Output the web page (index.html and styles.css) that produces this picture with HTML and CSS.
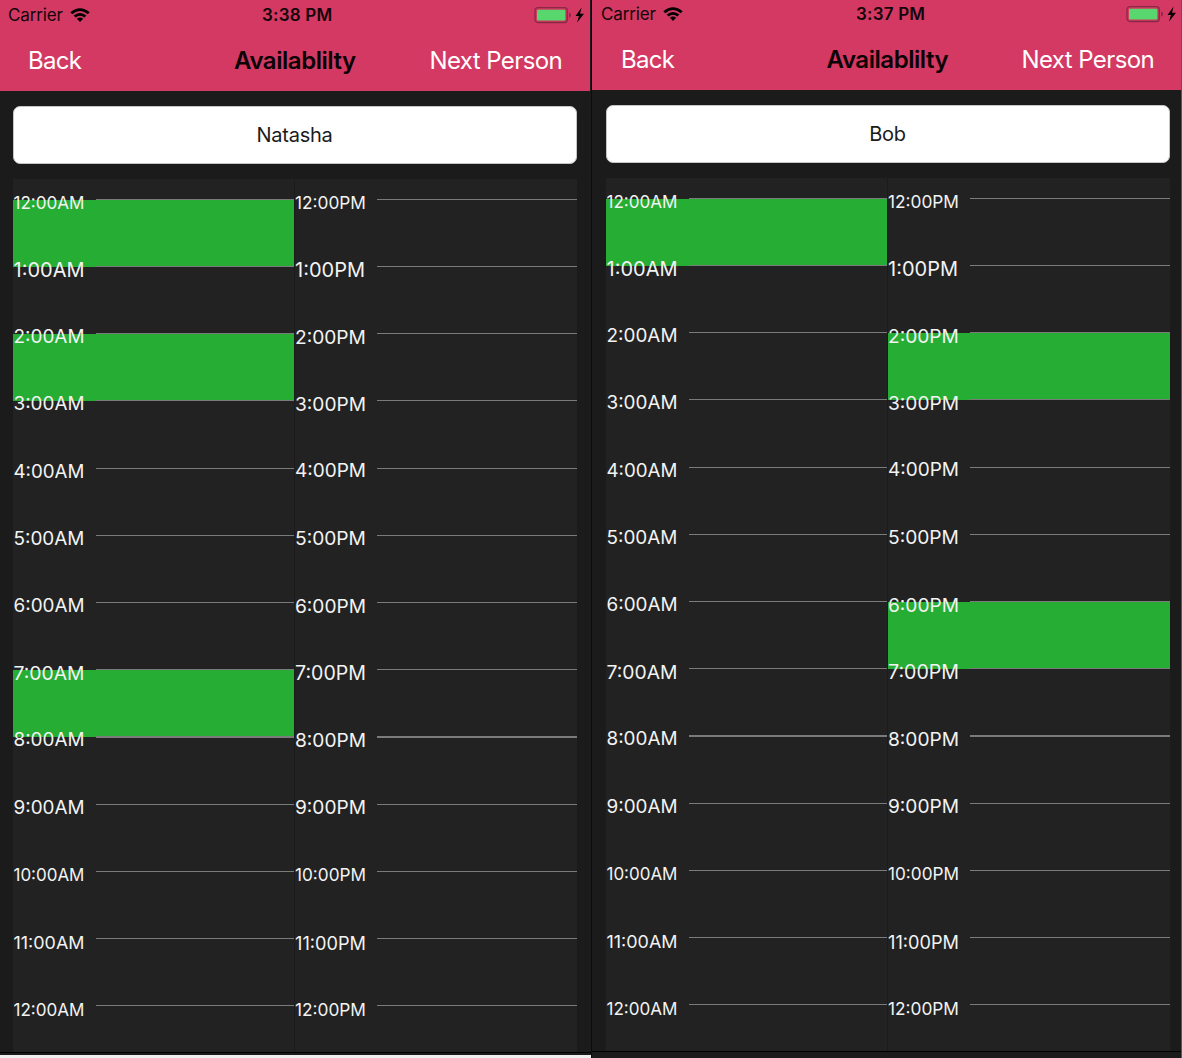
FILE: index.html
```
<!DOCTYPE html>
<html lang="en">
<head>
<meta charset="utf-8">
<title>Availability</title>
<link rel="stylesheet" href="styles.css">
<script src="app.js" defer></script>
</head>
<body>
<main class="screens">
  <section class="phone" data-free-am="0 2 7" data-free-pm="">
    <header class="header">
      <div class="status">
        <span class="carrier">Carrier</span>
        <svg class="wifi" viewBox="0 0 20 14"><path d="M.3 4.3Q10-3.7 19.700 4.300L17.700 6.300Q10-.4 2.300 6.300ZM3.600 7.600Q10 2.300 16.400 7.600L14.400 9.600Q10 6 5.600 9.600ZM6.800 10.700Q10 8.300 13.200 10.700L10 13.900Z"/></svg>
        <span class="clock">3:38 PM</span>
        <svg class="battery" viewBox="0 0 52 18"><rect x="1" y="1.700" width="32.300" height="14.800" rx="3" fill="none" stroke="#8b2845" stroke-width="1.300"/><rect x="3" y="3.700" width="28.300" height="10.800" rx="1.200" fill="#59d76f"/><path d="M35 6.500q2 .6 2 2.600t-2 2.600z" fill="#8b2845"/><path d="M47.600 1.500 41.500 10H45l-2 6.500L50 7.700H46z"/></svg>
      </div>
      <nav class="nav"><a class="back">Back</a><h1 class="title">Availablilty</h1><a class="next">Next Person</a></nav>
    </header>
    <div class="content">
      <div class="person">Natasha</div>
      <div class="calendar"><div class="column" data-half="AM"></div><div class="column" data-half="PM"></div></div>
    </div>
    <footer class="footer footer-light"></footer>
  </section>
  <section class="phone phone-second" data-free-am="0" data-free-pm="2 6">
    <header class="header">
      <div class="status">
        <span class="carrier">Carrier</span>
        <svg class="wifi" viewBox="0 0 20 14"><path d="M.3 4.3Q10-3.7 19.700 4.300L17.700 6.300Q10-.4 2.300 6.300ZM3.600 7.600Q10 2.300 16.400 7.600L14.400 9.600Q10 6 5.600 9.600ZM6.800 10.700Q10 8.300 13.200 10.700L10 13.900Z"/></svg>
        <span class="clock">3:37 PM</span>
        <svg class="battery" viewBox="0 0 52 18"><rect x="1" y="1.700" width="32.300" height="14.800" rx="3" fill="none" stroke="#8b2845" stroke-width="1.300"/><rect x="3" y="3.700" width="28.300" height="10.800" rx="1.200" fill="#59d76f"/><path d="M35 6.500q2 .6 2 2.600t-2 2.600z" fill="#8b2845"/><path d="M47.600 1.500 41.500 10H45l-2 6.500L50 7.700H46z"/></svg>
      </div>
      <nav class="nav"><a class="back">Back</a><h1 class="title">Availablilty</h1><a class="next">Next Person</a></nav>
    </header>
    <div class="content">
      <div class="person">Bob</div>
      <div class="calendar"><div class="column" data-half="AM"></div><div class="column" data-half="PM"></div></div>
    </div>
    <footer class="footer"></footer>
  </section>
</main>
</body>
</html>
```
FILE: styles.css
```
* { box-sizing: border-box; }
body { margin: 0; background: #1b1b1b; font-family: Inter, "Liberation Sans", sans-serif; }
.screens { display: grid; grid-template-columns: 592px 590px; height: 1058px; overflow: hidden; }
.phone { --gutter: 13px; display: flex; flex-direction: column; height: 1058px; border-right: 1px solid #0c0c0c; min-width: 0; }
.phone-second { --gutter: 14px; border-right: 1px solid #59595b; margin-top: -1px; height: 1059px; }
.header { height: 91px; background: #d33962; flex: none; }
.phone:first-child .header { width: 590px; }
.status { display: grid; grid-template-columns: 62px 20px 1fr 52px; align-items: center; height: 30px; padding: 0 4px 0 8px; color: #12060a; font-size: 17px; }
.phone-second .status { padding: 0 3px 0 9px; }
.carrier { letter-spacing: -.15px; }
.wifi { width: 20px; height: 14px; }
.clock { font-weight: 600; letter-spacing: .2px; padding-left: 172px; white-space: nowrap; }
.phone-second .clock { padding-left: 173px; }
.battery { width: 52px; height: 18px; }
.nav { display: grid; grid-template-columns: 206px 195.500px 1fr; height: 61px; align-items: center; padding-left: 28px; font-size: 24px; color: #fff; white-space: nowrap; }
.phone-second .nav { padding-left: 29px; grid-template-columns: 205.500px 195px 1fr; }
.back { letter-spacing: -.75px; }
.next { letter-spacing: -.6px; }
.title { margin: 0; color: #0b0205; font-size: 24px; font-weight: 600; letter-spacing: -.45px; }
.content { width: calc(564px + var(--gutter)); padding: 15px 0 0 var(--gutter); flex: 1; min-height: 0; display: flex; flex-direction: column; }
.person { height: 58px; flex: none; border-radius: 7px; border: 1px solid #c6c6c6; background: #fff; color: #1b1b1b; font-size: 20px; line-height: 56px; letter-spacing: -.25px; padding-right: 1px; text-align: center; }
.calendar { display: grid; grid-template-columns: 281px 283px; margin-top: 15px; flex: 1; min-height: 0; overflow: hidden; background: #222; }
.column { padding-top: 19.700px; }
.column + .column { border-left: 1px solid #1b1b1b; }
.hour { display: grid; grid-template-columns: 83px 1fr; height: 67.220px; }
.column + .column .hour { grid-template-columns: 82px 1fr; }
.free { background: linear-gradient(#26ad33, #26ad33) 0 1px / 100% 67px no-repeat; box-shadow: 0 1px 0 #26ad33; }
.line { height: 1px; background: #7b7b7b; }
.line-heavy { height: 2px; }
.label { height: 20px; margin: -6px 0 0 .5px; line-height: 20px; color: #f3f3f3; white-space: nowrap; }
.column + .column .label { margin: -6.400px 0 0; }
.column .label-long, .column + .column .label-long { margin-top: -5.500px; }
.label span { display: inline-block; font-size: 20px; }
.footer { height: 6px; background: #1b1b1b; border-top: 1px solid #000; flex: none; }
.phone-second .footer { height: 7px; }
.footer-light { width: 591px; border-bottom: 3px solid #eee; }
```
FILE: app.js
```
// Builds the hour rows and shrinks each label until it fits the label width.
const LABEL_WIDTH = 71;
const MAX_SIZE = 20;
document.querySelectorAll('.phone').forEach(phone => {
  phone.querySelectorAll('.column').forEach(column => {
    const half = column.dataset.half;
    const free = (half === 'AM' ? phone.dataset.freeAm : phone.dataset.freePm).split(' ').filter(Boolean);
    for (let i = 0; i <= 12; i++) {
      const hour = i % 12 || 12;
      const row = document.createElement('div');
      row.className = 'hour' + (free.includes(String(i)) ? ' free' : '');
      const label = document.createElement('div');
      label.className = 'label' + (hour > 9 ? ' label-long' : '');
      const text = document.createElement('span');
      text.textContent = hour + ':00' + half;
      label.append(text);
      const line = document.createElement('div');
      line.className = 'line' + (i === 8 ? ' line-heavy' : '');
      row.append(label, line);
      column.append(row);
      const size = Math.min(MAX_SIZE, MAX_SIZE * LABEL_WIDTH / text.getBoundingClientRect().width);
      text.style.fontSize = size + 'px';
    }
  });
});
```
